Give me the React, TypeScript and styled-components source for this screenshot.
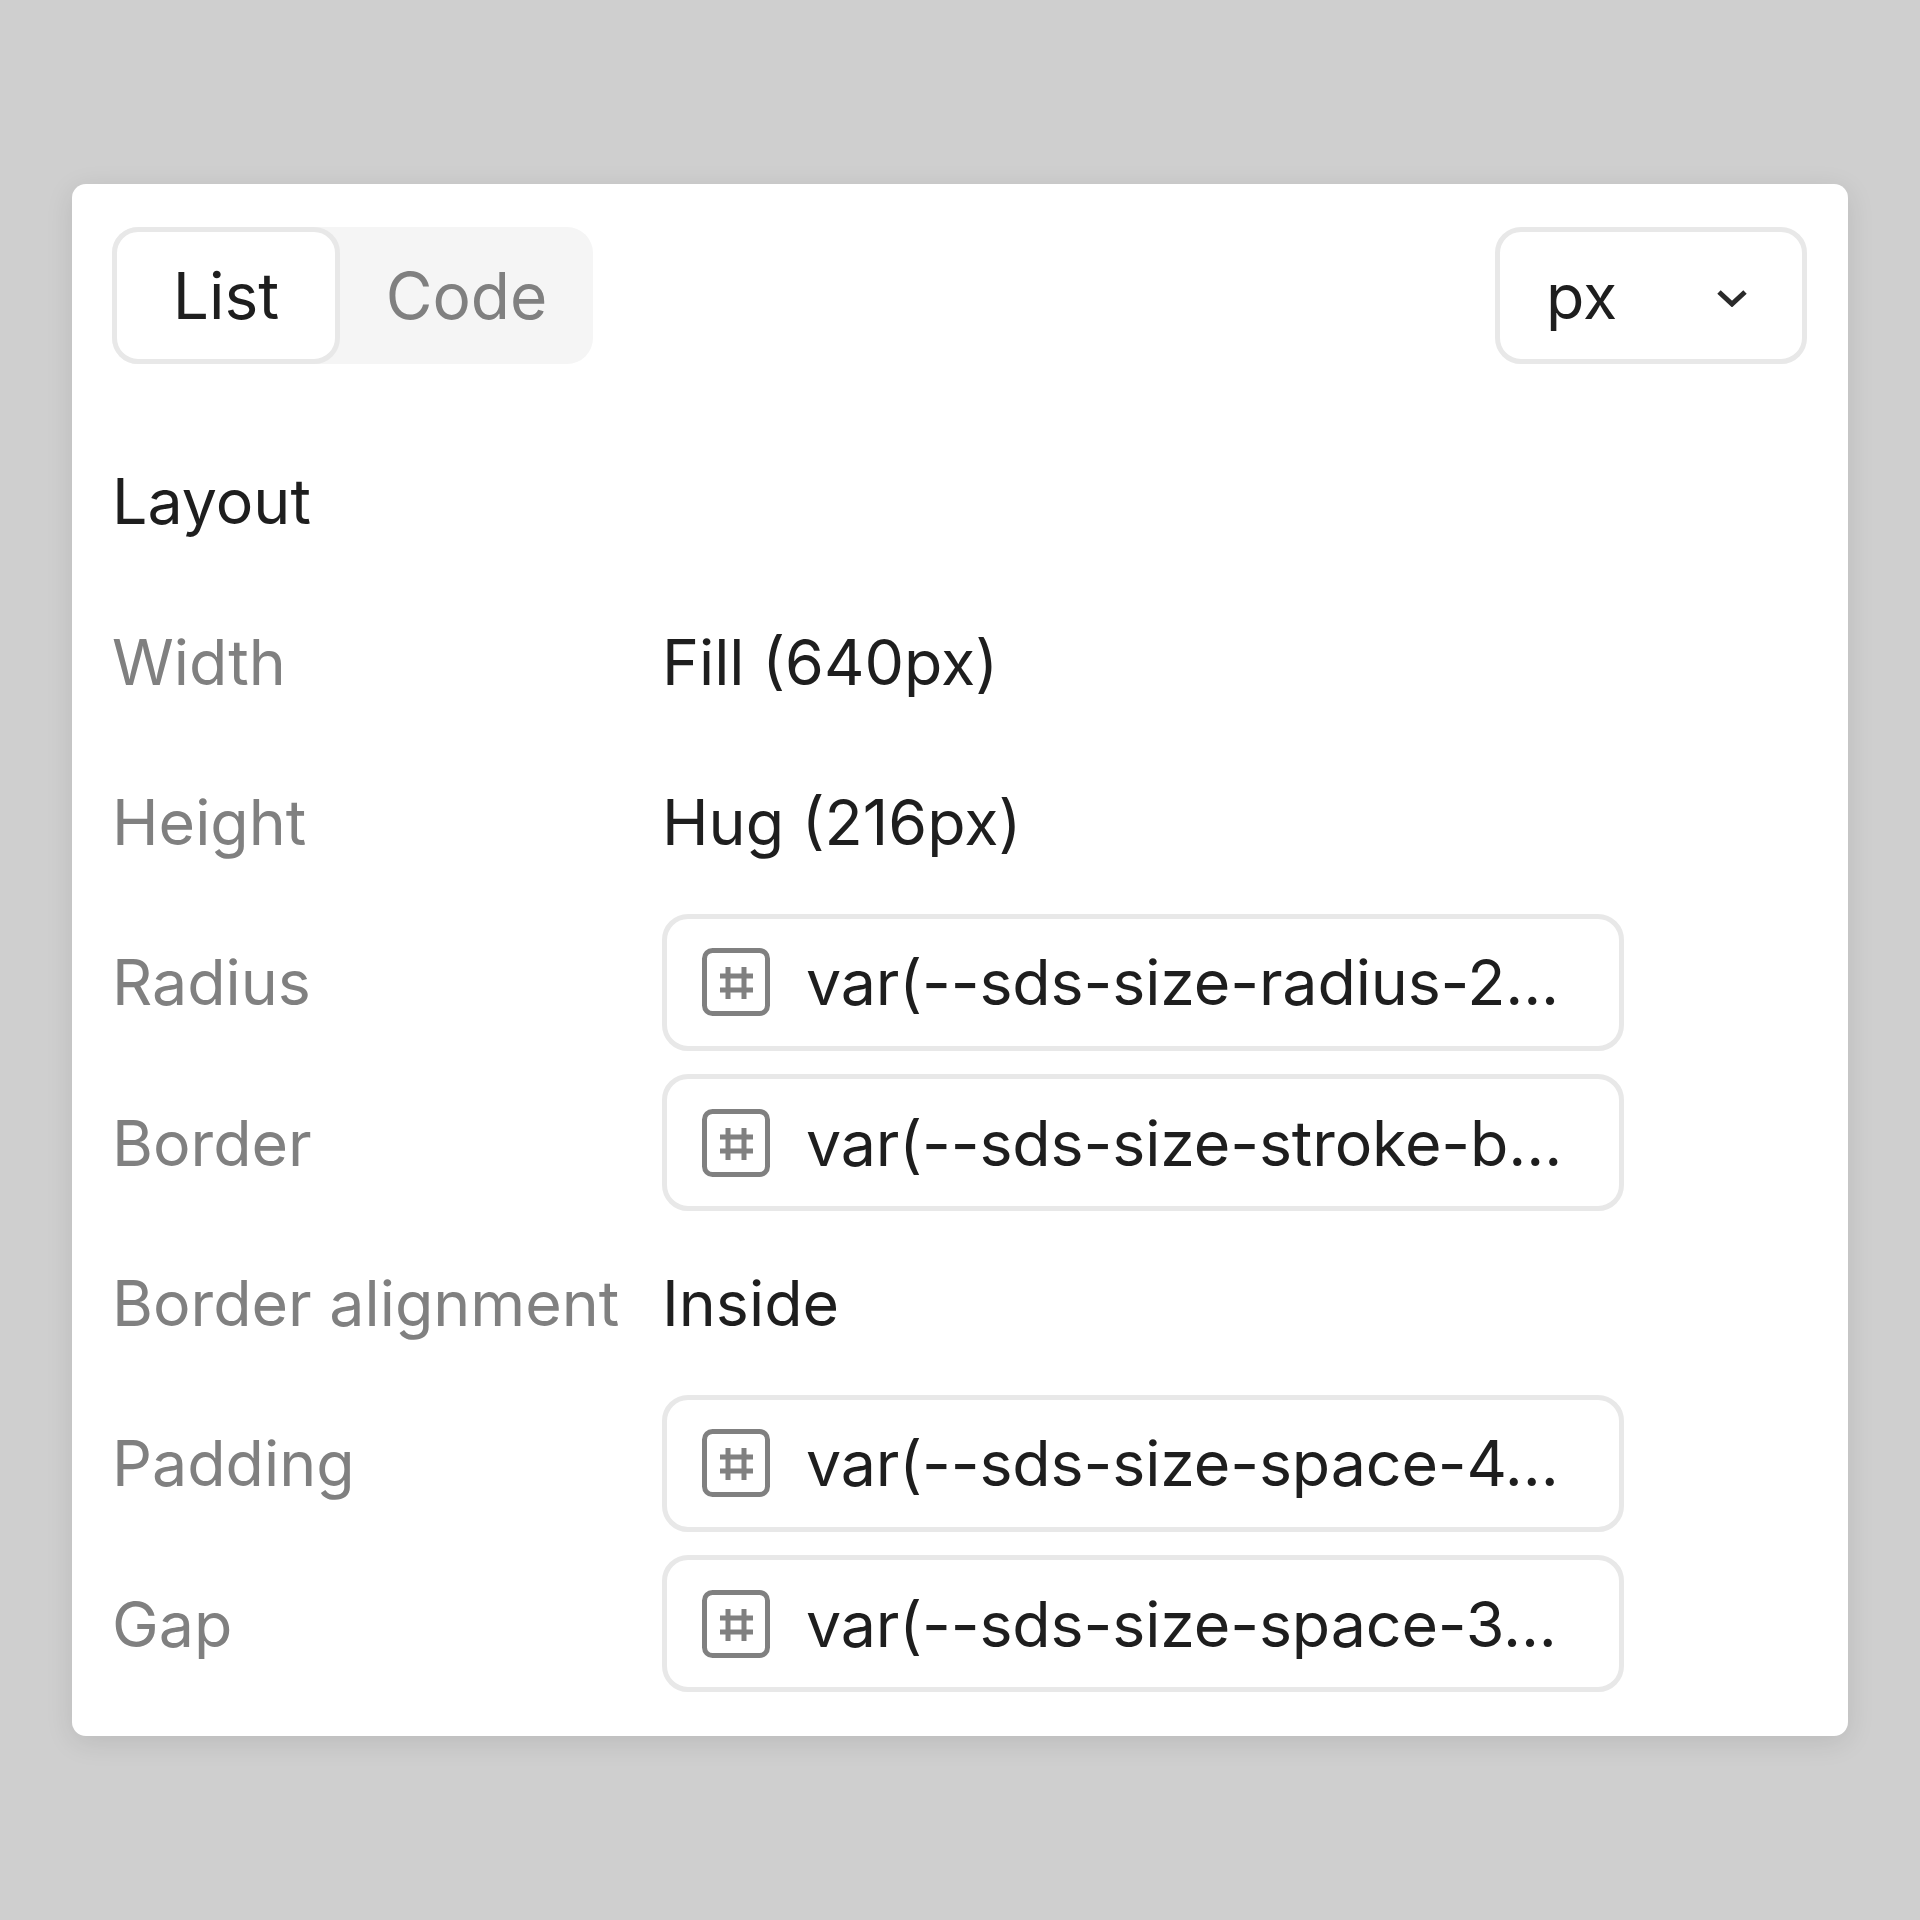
import React from "react";
import styled, { createGlobalStyle } from "styled-components";

const Global = createGlobalStyle`
  html, body { margin: 0; padding: 0; background: #cfcfcf; }
  #root { width: 1920px; height: 1920px; }
`;

const Page = styled.div`
  width: 1920px;
  height: 1920px;
  display: flex;
  align-items: center;
  justify-content: center;
  background: #cfcfcf;
  font-family: Inter, "Liberation Sans", sans-serif;
  font-size: 62.7px;
  color: #1e1e1e;
`;

const Card = styled.div`
  width: 1776px;
  height: 1552px;
  box-sizing: border-box;
  padding: 43px 41px 43px 40px;
  background: #fff;
  border-radius: 14px;
  box-shadow: 0 6px 28px rgba(0, 0, 0, 0.1);
  display: flex;
  flex-direction: column;
  gap: 69px;
`;

const Toolbar = styled.div`
  display: flex;
  justify-content: space-between;
  align-items: stretch;
  height: 137px;
`;

const Tabs = styled.div`
  display: flex;
  width: 481px;
  background: #f5f5f5;
  border-radius: 26px;
`;

const Tab = styled.div<{ $active?: boolean }>`
  box-sizing: border-box;
  width: ${(p) => (p.$active ? "228px" : "253px")};
  display: flex;
  align-items: center;
  justify-content: center;
  border-radius: 26px;
  font-size: 64px;
  color: ${(p) => (p.$active ? "#1e1e1e" : "#808080")};
  background: ${(p) => (p.$active ? "#fff" : "transparent")};
  border: ${(p) => (p.$active ? "5px solid #e8e8e8" : "none")};
`;

const Select = styled.div`
  box-sizing: border-box;
  width: 312px;
  display: flex;
  align-items: center;
  justify-content: space-between;
  padding: 0 55px 0 46px;
  border: 5px solid #e8e8e8;
  border-radius: 26px;
`;

const Rows = styled.div`
  display: flex;
  flex-direction: column;
  gap: 23.3px;
`;

const Row = styled.div`
  display: grid;
  grid-template-columns: 550px 962px;
  align-items: center;
  height: 137px;
`;

const Heading = styled.div`
  line-height: 137px;
`;

const Label = styled.div`
  color: #808080;
  white-space: nowrap;
`;

const Value = styled.div`
  white-space: nowrap;
`;

const TokenField = styled.div`
  box-sizing: border-box;
  height: 137px;
  display: flex;
  align-items: center;
  gap: 36px;
  padding-left: 35px;
  border: 5px solid #e8e8e8;
  border-radius: 26px;
  white-space: nowrap;
  letter-spacing: -0.14px;
`;

const ChevronSvg = styled.svg`
  margin-top: 5px;
`;

const TokenIcon = () => (
  <svg width="68" height="68" viewBox="0 0 68 68" fill="none" stroke="#808080" aria-hidden="true" style={{ flex: "none" }}>
    <rect x="2.5" y="2.5" width="63" height="63" rx="8" strokeWidth="5" />
    <path d="M26 19v32M42 19v32M18 28h33M18 42h33" strokeWidth="5" />
  </svg>
);

const Chevron = () => (
  <ChevronSvg width="30" height="18" viewBox="0 0 30 18" fill="none" stroke="#2a2a2a" strokeWidth="5" aria-hidden="true">
    <path d="M2 3l13 12L28 3" />
  </ChevronSvg>
);

const rows: { label: string; value?: string; token?: string }[] = [
  { label: "Width", value: "Fill (640px)" },
  { label: "Height", value: "Hug (216px)" },
  { label: "Radius", token: "var(--sds-size-radius-2..." },
  { label: "Border", token: "var(--sds-size-stroke-b..." },
  { label: "Border alignment", value: "Inside" },
  { label: "Padding", token: "var(--sds-size-space-4..." },
  { label: "Gap", token: "var(--sds-size-space-3..." },
];

export default function App() {
  return (
    <Page>
      <Global />
      <Card>
        <Toolbar>
          <Tabs>
            <Tab $active>List</Tab>
            <Tab>Code</Tab>
          </Tabs>
          <Select>
            <span>px</span>
            <Chevron />
          </Select>
        </Toolbar>
        <Rows>
          <Heading>Layout</Heading>
          {rows.map((r) => (
            <Row key={r.label}>
              <Label>{r.label}</Label>
              {r.token ? (
                <TokenField>
                  <TokenIcon />
                  <span>{r.token}</span>
                </TokenField>
              ) : (
                <Value>{r.value}</Value>
              )}
            </Row>
          ))}
        </Rows>
      </Card>
    </Page>
  );
}
